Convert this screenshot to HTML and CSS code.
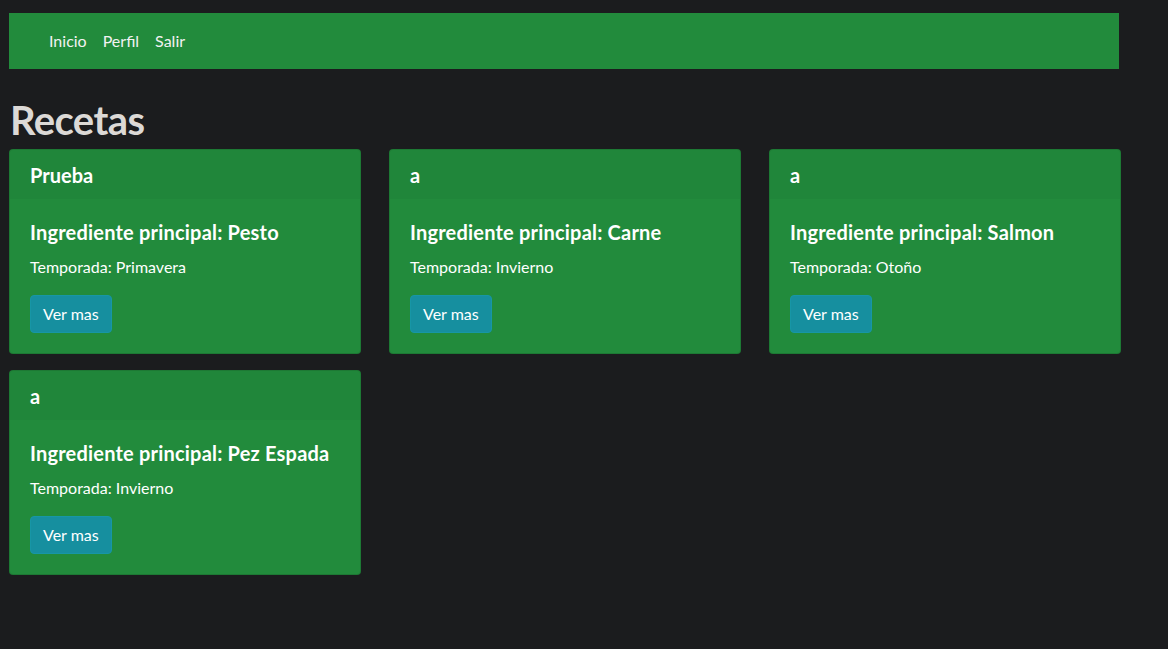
FILE: index.html
```html
<!DOCTYPE html>
<html lang="es">
<head>
<meta charset="utf-8">
<title>Recetas</title>
<link rel="stylesheet" href="styles.css">
</head>
<body>
<div class="container">
  <nav class="navbar">
    <a class="nav-link" href="#">Inicio</a>
    <a class="nav-link" href="#">Perfil</a>
    <a class="nav-link" href="#">Salir</a>
  </nav>
  <div class="title-wrap">
    <h1 class="title">Recetas</h1>
  </div>
  <div class="grid">
    <div class="card">
      <div class="card-header">Prueba</div>
      <div class="card-body">
        <h5 class="card-title">Ingrediente principal: Pesto</h5>
        <p class="card-text">Temporada: Primavera</p>
        <a class="btn" href="#">Ver mas</a>
      </div>
    </div>
    <div class="card">
      <div class="card-header">a</div>
      <div class="card-body">
        <h5 class="card-title">Ingrediente principal: Carne</h5>
        <p class="card-text">Temporada: Invierno</p>
        <a class="btn" href="#">Ver mas</a>
      </div>
    </div>
    <div class="card">
      <div class="card-header">a</div>
      <div class="card-body">
        <h5 class="card-title">Ingrediente principal: Salmon</h5>
        <p class="card-text">Temporada: Otoño</p>
        <a class="btn" href="#">Ver mas</a>
      </div>
    </div>
    <div class="card">
      <div class="card-header">a</div>
      <div class="card-body">
        <h5 class="card-title">Ingrediente principal: Pez Espada</h5>
        <p class="card-text">Temporada: Invierno</p>
        <a class="btn" href="#">Ver mas</a>
      </div>
    </div>
  </div>
</div>
</body>
</html>
```
FILE: styles.css
```css
* { box-sizing: border-box; }
html, body { margin: 0; padding: 0; }
body {
  background: #1b1c1e;
  font-family: Lato, "Noto Sans", sans-serif;
  font-size: 16px;
  line-height: 24px;
  color: #ffffff;
}
.container {
  width: 1112px;
  padding: 13px 0 0 9px;
  box-sizing: content-box;
}
.navbar {
  width: 1110px;
  height: 56px;
  background: #228b3c;
  display: flex;
  align-items: center;
  padding: 0 32px;
}
.nav-link {
  color: #f2f2f2;
  text-decoration: none;
  padding: 8px;
}
.title-wrap {
  height: 80px;
  padding: 27px 0 0 1px;
}
.title {
  margin: 0;
  font-size: 40px;
  line-height: 48px;
  font-weight: 700;
  letter-spacing: -0.6px;
  color: #dcd9d6;
}
.grid {
  display: grid;
  grid-template-columns: repeat(3, 352px);
  column-gap: 28px;
  row-gap: 16px;
}
.card {
  background: #228b3c;
  border: 1px solid rgba(0,0,0,0.125);
  border-radius: 4px;
  overflow: hidden;
}
.card-header {
  background: rgba(0,0,0,0.03);
  padding: 13px 20px 12px;
  font-size: 20px;
  line-height: 24px;
  font-weight: 700;
}
.card-body {
  padding: 21px 20px 20px;
}
.card-title {
  margin: 0 0 11px;
  font-size: 20px;
  line-height: 24px;
  font-weight: 700;
  letter-spacing: 0.2px;
}
.card-text {
  margin: 0 0 16px;
  font-size: 16px;
}
.btn {
  display: inline-block;
  color: #fff;
  text-decoration: none;
  background: #168f9f;
  border: 1px solid #1796a6;
  border-radius: 4px;
  padding: 6px 12px;
  font-size: 16px;
  line-height: 24px;
}
```
